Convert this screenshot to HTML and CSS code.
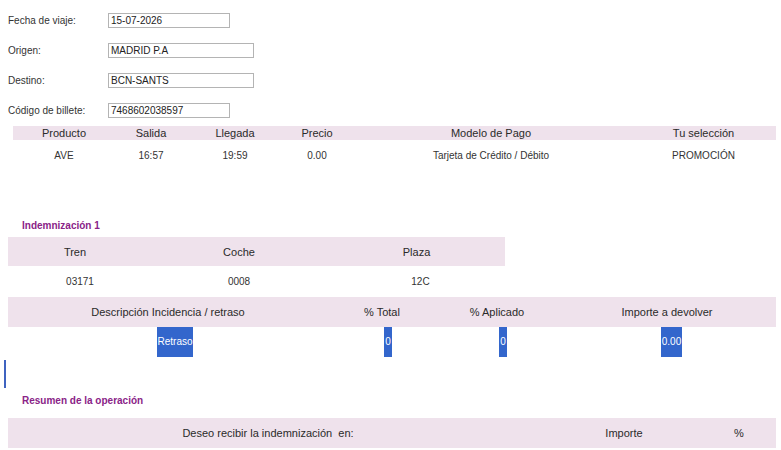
FILE: index.html
```html
<!DOCTYPE html>
<html lang="es">
<head>
    <meta charset="UTF-8">
    <meta name="viewport" content="width=device-width, initial-scale=1.0">
    <title>Solicitud de indemnización</title>
    <link rel="stylesheet" href="styles.css">
</head>
<body>
    <div class="datos-viaje">
        <div class="campo">
            <label for="fecha">Fecha de viaje:</label>
            <input type="text" id="fecha" class="corto" value="15-07-2026">
        </div>
        <div class="campo">
            <label for="origen">Origen:</label>
            <input type="text" id="origen" class="largo" value="MADRID P.A">
        </div>
        <div class="campo">
            <label for="destino">Destino:</label>
            <input type="text" id="destino" class="largo" value="BCN-SANTS">
        </div>
        <div class="campo">
            <label for="billete">Código de billete:</label>
            <input type="text" id="billete" class="corto" value="7468602038597">
        </div>
    </div>

    <table class="tabla tabla-billete">
        <colgroup>
            <col style="width:102px">
            <col style="width:72px">
            <col style="width:96px">
            <col style="width:68px">
            <col style="width:280px">
            <col>
        </colgroup>
        <tr>
            <th>Producto</th>
            <th>Salida</th>
            <th>Llegada</th>
            <th>Precio</th>
            <th>Modelo de Pago</th>
            <th>Tu selección</th>
        </tr>
        <tr>
            <td>AVE</td>
            <td>16:57</td>
            <td>19:59</td>
            <td>0.00</td>
            <td>Tarjeta de Crédito / Débito</td>
            <td>PROMOCIÓN</td>
        </tr>
    </table>

    <h2 class="titulo-seccion primero">Indemnización 1</h2>

    <table class="tabla tabla-plaza">
        <colgroup>
            <col style="width:134px">
            <col style="width:194px">
            <col>
        </colgroup>
        <tr>
            <th>Tren</th>
            <th>Coche</th>
            <th class="plaza">Plaza</th>
        </tr>
        <tr>
            <td class="tren">03171</td>
            <td>0008</td>
            <td>12C</td>
        </tr>
    </table>

    <table class="tabla tabla-incidencia">
        <colgroup>
            <col style="width:320px">
            <col style="width:108px">
            <col style="width:122px">
            <col>
        </colgroup>
        <tr>
            <th>Descripción Incidencia / retraso</th>
            <th>% Total</th>
            <th>% Aplicado</th>
            <th>Importe a devolver</th>
        </tr>
        <tr>
            <td class="descripcion"><span class="valor">Retraso</span></td>
            <td><span class="valor">0</span></td>
            <td><span class="valor">0</span></td>
            <td class="importe"><span class="valor">0.00</span></td>
        </tr>
    </table>

    <div class="separador"></div>

    <h2 class="titulo-seccion">Resumen de la operación</h2>

    <table class="tabla tabla-resumen">
        <colgroup>
            <col style="width:520px">
            <col style="width:192px">
            <col style="width:38px">
            <col>
        </colgroup>
        <tr>
            <th>Deseo recibir la indemnización &nbsp;en:</th>
            <th>Importe</th>
            <th>%</th>
            <th></th>
        </tr>
    </table>
</body>
</html>
```

FILE: styles.css
```css
body {
    margin: 0;
    font-family: "Liberation Sans", Arial, sans-serif;
    font-size: 10px;
    color: #333;
    background: #fff;
}

/* Datos del viaje */
.datos-viaje {
    padding-top: 5px;
}
.campo {
    display: flex;
    align-items: center;
    height: 30px;
}
.campo label {
    width: 100px;
    padding-left: 8px;
}
.campo input {
    box-sizing: border-box;
    height: 15px;
    padding: 0 2px;
    border: 1px solid #b4b4b4;
    font-family: inherit;
    font-size: 10px;
    color: #222;
}
.campo input.corto {
    width: 122px;
}
.campo input.largo {
    width: 146px;
}

/* Tablas */
.tabla {
    border-collapse: collapse;
    table-layout: fixed;
}
.tabla th {
    padding: 0;
    background-color: #efe2ec;
    font-weight: normal;
    font-size: 11px;
    text-align: center;
    color: #2a2a2a;
}
.tabla td {
    padding: 0;
    text-align: center;
}

.tabla-billete {
    margin: 1px 0 0 13px;
    width: 763px;
}
.tabla-billete th {
    height: 14px;
}
.tabla-billete td {
    height: 30px;
}

.tabla-plaza {
    margin-left: 8px;
    width: 497px;
}
.tabla-plaza th {
    height: 29px;
}
.tabla-plaza th.plaza {
    padding-right: 8px;
}
.tabla-plaza td {
    height: 30px;
}
.tabla-plaza td.tren {
    padding-left: 10px;
}

.tabla-incidencia {
    margin: 1px 0 0 8px;
    width: 768px;
}
.tabla-incidencia th {
    height: 30px;
}
.tabla-incidencia td {
    height: 30px;
    padding-left: 12px;
    vertical-align: top;
}
.tabla-incidencia td.descripcion {
    padding-left: 14px;
}
.tabla-incidencia td.importe {
    padding-left: 9px;
}
.valor {
    display: inline-block;
    height: 30px;
    line-height: 30px;
    padding: 0 1px;
    background-color: #3366cc;
    color: #fff;
}
.tabla-incidencia td.descripcion .valor {
    padding: 0;
}

.tabla-resumen {
    margin-left: 8px;
    width: 768px;
}
.tabla-resumen th {
    height: 30px;
}

/* Títulos de sección */
.titulo-seccion {
    margin: 6px 0 10px 22px;
    font-size: 10px;
    line-height: 14px;
    font-weight: bold;
    color: #8a2387;
}
.titulo-seccion.primero {
    margin: 49px 0 4px 22px;
}

.separador {
    margin: 3px 0 0 4px;
    width: 2px;
    height: 28px;
    background-color: #3f63c0;
}
```
